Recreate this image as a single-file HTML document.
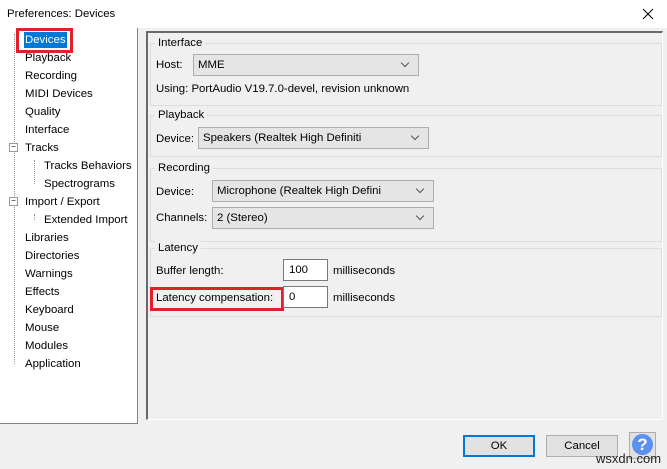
<!DOCTYPE html><html><head><style>
body{margin:0;width:667px;height:469px;background:#f0f0f0;font-family:"Liberation Sans",sans-serif;font-size:11.4px;line-height:16px;color:#000;position:relative;overflow:hidden}
.a{position:absolute;white-space:nowrap}
.g{position:absolute;border:1px solid #dcdcdc;left:150px;width:510px}
.gl{position:absolute;background:#f0f0f0;padding:0 3px;left:4px;top:-9px}
.cb{position:absolute;background:#e5e5e5;border:1px solid #adadad;box-sizing:border-box;height:22px;padding:2px 0 0 4px}
.cb:after{content:"";position:absolute;right:10px;top:5px;width:5px;height:5px;border-right:1px solid #555;border-bottom:1px solid #555;transform:rotate(45deg)}
.tb{position:absolute;background:#fff;border:1px solid #7a7a7a;box-sizing:border-box;height:22px;padding:2px 0 0 5px}
</style></head><body>
<div class="a" style="left:0;top:0;width:667px;height:28px;background:#fff"></div>
<div class="a" style="left:7px;top:6px">Preferences: Devices</div>
<svg class="a" style="left:642px;top:8px" width="12" height="12"><path d="M1 1L11 11M11 1L1 11" stroke="#000" stroke-width="1"/></svg>
<div class="a" style="left:0;top:28px;width:137px;height:395px;background:#fff;border-right:1px solid #828282;border-bottom:1px solid #828282"></div>
<div class="a" style="left:14px;top:34px;height:330px;border-left:1px dotted #999"></div>
<div class="a" style="left:34px;top:160px;height:24px;border-left:1px dotted #999"></div>
<div class="a" style="left:34px;top:214px;height:6px;border-left:1px dotted #999"></div>
<div class="a" style="left:24px;top:32px;background:#0078d7;color:#fff;padding:0 1px">Devices</div>
<div class="a" style="left:16px;top:28px;width:57px;height:25px;border:3px solid #e0202a;box-sizing:border-box"></div>
<div class="a" style="left:25px;top:50px">Playback</div>
<div class="a" style="left:25px;top:68px">Recording</div>
<div class="a" style="left:25px;top:86px">MIDI Devices</div>
<div class="a" style="left:25px;top:104px">Quality</div>
<div class="a" style="left:25px;top:122px">Interface</div>
<div class="a" style="left:25px;top:140px">Tracks</div>
<div class="a" style="left:44px;top:158px">Tracks Behaviors</div>
<div class="a" style="left:44px;top:176px">Spectrograms</div>
<div class="a" style="left:25px;top:194px">Import / Export</div>
<div class="a" style="left:44px;top:212px">Extended Import</div>
<div class="a" style="left:25px;top:230px">Libraries</div>
<div class="a" style="left:25px;top:248px">Directories</div>
<div class="a" style="left:25px;top:266px">Warnings</div>
<div class="a" style="left:25px;top:284px">Effects</div>
<div class="a" style="left:25px;top:302px">Keyboard</div>
<div class="a" style="left:25px;top:320px">Mouse</div>
<div class="a" style="left:25px;top:338px">Modules</div>
<div class="a" style="left:25px;top:356px">Application</div>
<div class="a" style="left:9px;top:143px;width:7px;height:7px;border:1px solid #999;background:#fff;font-size:8px;line-height:6px;text-align:center">−</div>
<div class="a" style="left:9px;top:197px;width:7px;height:7px;border:1px solid #999;background:#fff;font-size:8px;line-height:6px;text-align:center">−</div>
<div class="a" style="left:146px;top:31px;width:517px;height:389px;border-left:2px solid #696969;border-top:2px solid #696969;border-right:1px solid #fff;border-bottom:1px solid #fff;box-sizing:border-box"></div>
<div class="g" style="top:43px;height:61px"><span class="gl">Interface</span></div>
<div class="a" style="left:156px;top:57px">Host:</div>
<div class="cb" style="left:193px;top:54px;width:226px">MME</div>
<div class="a" style="left:156px;top:81px">Using: PortAudio V19.7.0-devel, revision unknown</div>
<div class="g" style="top:115px;height:40px"><span class="gl">Playback</span></div>
<div class="a" style="left:156px;top:131px">Device:</div>
<div class="cb" style="left:198px;top:127px;width:231px">Speakers (Realtek High Definiti</div>
<div class="g" style="top:168px;height:72px"><span class="gl">Recording</span></div>
<div class="a" style="left:156px;top:184px">Device:</div>
<div class="cb" style="left:212px;top:180px;width:222px">Microphone (Realtek High Defini</div>
<div class="a" style="left:156px;top:210px">Channels:</div>
<div class="cb" style="left:212px;top:207px;width:222px">2 (Stereo)</div>
<div class="g" style="top:248px;height:67px"><span class="gl">Latency</span></div>
<div class="a" style="left:156px;top:263px">Buffer length:</div>
<div class="tb" style="left:283px;top:259px;width:45px">100</div>
<div class="a" style="left:333px;top:263px">milliseconds</div>
<div class="a" style="left:150px;top:287px;width:134px;height:24px;border:3px solid #e0202a;box-sizing:border-box"></div>
<div class="a" style="left:156px;top:290px">Latency compensation:</div>
<div class="tb" style="left:283px;top:286px;width:45px">0</div>
<div class="a" style="left:333px;top:290px">milliseconds</div>
<div class="a" style="left:463px;top:435px;width:72px;height:22px;border:2px solid #0078d7;background:#e1e1e1;box-sizing:border-box;text-align:center;padding-top:1px">OK</div>
<div class="a" style="left:546px;top:435px;width:72px;height:22px;border:1px solid #adadad;background:#e1e1e1;box-sizing:border-box;text-align:center;padding-top:2px">Cancel</div>
<div class="a" style="left:629px;top:432px;width:27px;height:27px;border:1px solid #adadad;background:#e1e1e1;box-sizing:border-box"></div>
<div class="a" style="left:632px;top:434px;width:21px;height:21px;border-radius:50%;background:#5b8ff0;color:#fff;font-weight:bold;font-size:17px;text-align:center;line-height:21px">?</div>
<div class="a" style="left:596px;top:451px;font-size:13px;color:#222">wsxdn.com</div>
</body></html>
